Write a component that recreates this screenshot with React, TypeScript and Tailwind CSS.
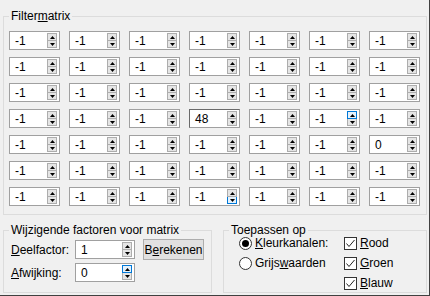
import React from 'react'

type Hl = 'up' | 'down' | undefined

const matrix: string[][] = Array.from({ length: 7 }, (_, r) =>
  Array.from({ length: 7 }, (_, c) => (r === 3 && c === 3 ? '48' : r === 4 && c === 6 ? '0' : '-1'))
)

function Arrow({ up }: { up: boolean }) {
  return (
    <svg width="5" height="3" viewBox="0 0 5 3" className="block">
      <polygon points={up ? '2.5,0 5,3 0,3' : '0,0 5,0 2.5,3'} fill="#000" />
    </svg>
  )
}

function Spin({ hl }: { hl?: Hl }) {
  return (
    <div className="flex h-[15px] w-[10px] flex-col">
      <div
        className={
          'flex h-[8px] items-center justify-center border ' +
          (hl === 'up' ? 'border-[#0078d7] bg-[#e5f1fb]' : 'border-[#adadad] bg-[#e5e5e5]')
        }
      >
        <Arrow up />
      </div>
      <div
        className={
          'flex h-[7px] items-center justify-center border-x border-b ' +
          (hl === 'down' ? 'border-[#0078d7] bg-[#e5f1fb]' : 'border-[#adadad] bg-[#e5e5e5]')
        }
      >
        <Arrow up={false} />
      </div>
    </div>
  )
}

function Field({ value, w, hl, focus }: { value: string; w: string; hl?: Hl; focus?: boolean }) {
  return (
    <div
      className={
        'flex h-[19px] items-center border bg-white pl-[5px] pr-[2px] ' +
        w +
        (focus ? ' border-[#a0a0a0] border-t-[#6a6a6a] border-l-[#6a6a6a]' : ' border-[#a0a0a0]')
      }
    >
      <span className="flex-1 leading-none">{value}</span>
      <Spin hl={hl} />
    </div>
  )
}

function Legend({ children, className }: { children: React.ReactNode; className: string }) {
  return <legend className={'px-[2px] leading-[14px] ' + className}>{children}</legend>
}

function Radio({ checked }: { checked?: boolean }) {
  return (
    <span className="flex h-[13px] w-[13px] items-center justify-center rounded-full border border-[#333] bg-white">
      {checked && <span className="h-[7px] w-[7px] rounded-full bg-[#000]" />}
    </span>
  )
}

function Check() {
  return (
    <span className="flex h-[13px] w-[13px] items-center justify-center border border-[#333] bg-white">
      <svg width="11" height="11" viewBox="0 0 11 11">
        <polyline points="1.5,5.5 4,8.5 9.5,2" fill="none" stroke="#222" strokeWidth="1" />
      </svg>
    </span>
  )
}

export default function App() {
  return (
    <div
      className="flex h-[296px] w-[430px] flex-col border-r border-b border-[#404040] bg-[#f0f0f0] pl-[3px] pt-[9px] text-[12px] text-black"
      style={{ fontFamily: '"Liberation Sans", Arial, sans-serif' }}
    >
      <fieldset className="h-[206px] w-[424px] border border-[#dcdcdc] px-[5px] pt-[8px]">
        <Legend className="ml-0">
          Filter<u>m</u>atrix
        </Legend>
        <div className="grid grid-cols-[repeat(7,51px)] gap-x-[9px] gap-y-[7px]">
          {matrix.map((row, r) =>
            row.map((v, c) => (
              <Field
                key={r + '-' + c}
                value={v}
                w="w-[51px]"
                focus={r === 3 && c === 3}
                hl={r === 3 && c === 5 ? 'up' : r === 6 && c === 3 ? 'down' : undefined}
              />
            ))
          )}
        </div>
      </fieldset>

      <div className="mt-[8px] flex gap-[11px]">
        <fieldset className="h-[70px] w-[209px] border border-[#dcdcdc] pl-[7px] pt-[2px]">
          <Legend className="-ml-[2px]">Wijzigende factoren voor matrix</Legend>
          <div className="flex flex-col gap-[3px]">
            <div className="flex h-[21px] items-center">
              <span className="w-[64px]">
                <u>D</u>eelfactor:
              </span>
              <Field value="1" w="w-[60px]" />
              <button className="ml-[8px] h-[21px] w-[61px] border border-[#adadad] bg-[#e1e1e1] leading-none">
                B<u>e</u>rekenen
              </button>
            </div>
            <div className="flex h-[19px] items-center">
              <span className="w-[64px]">
                <u>A</u>fwijking:
              </span>
              <Field value="0" w="w-[60px]" hl="up" />
            </div>
          </div>
        </fieldset>

        <fieldset className="h-[70px] w-[204px] border border-[#dcdcdc] pl-[15px]">
          <Legend className="-ml-[10px]">Toepassen op</Legend>
          <div className="grid grid-cols-[105px_auto] grid-rows-[13px_13px_13px] gap-y-[7px] leading-[13px]">
            <div className="flex items-center gap-[3px]">
              <Radio checked />
              <span>
                <u>K</u>leurkanalen:
              </span>
            </div>
            <div className="flex items-center gap-[3px]">
              <Check />
              <span>
                <u>R</u>ood
              </span>
            </div>
            <div className="flex items-center gap-[3px]">
              <Radio />
              <span>
                Grijs<u>w</u>aarden
              </span>
            </div>
            <div className="flex items-center gap-[3px]">
              <Check />
              <span>
                <u>G</u>roen
              </span>
            </div>
            <div />
            <div className="flex items-center gap-[3px]">
              <Check />
              <span>
                <u>B</u>lauw
              </span>
            </div>
          </div>
        </fieldset>
      </div>
    </div>
  )
}
